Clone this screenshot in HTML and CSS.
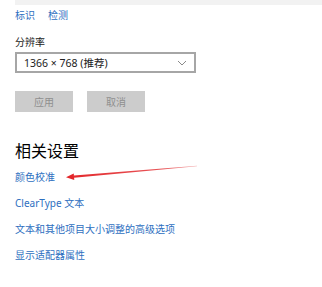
FILE: index.html
```html
<!DOCTYPE html>
<html lang="zh-CN">
<head>
<meta charset="utf-8">
<title>显示设置</title>
<link rel="stylesheet" href="styles.css">
</head>
<body>
<div class="page">
  <div class="band"></div>
  <div class="tabs">
    <a class="link">标识</a>
    <a class="link">检测</a>
  </div>
  <div class="label">分辨率</div>
  <div class="select">
    <span class="select-text">1366 × 768 (推荐)</span>
    <svg class="chev" width="10" height="6" viewBox="0 0 10 6"><path d="M1 1 L5 5 L9 1" fill="none" stroke="#8a8a8a" stroke-width="1"/></svg>
  </div>
  <div class="buttons">
    <div class="btn">应用</div>
    <div class="btn">取消</div>
  </div>
  <div class="heading">相关设置</div>
  <div class="links">
    <a class="link">颜色校准</a>
    <a class="link">ClearType 文本</a>
    <a class="link">文本和其他项目大小调整的高级选项</a>
    <a class="link">显示适配器属性</a>
  </div>
</div>
<svg class="arrow" width="322" height="287" viewBox="0 0 322 287">
  <defs>
    <linearGradient id="g" x1="66" y1="0" x2="197" y2="0" gradientUnits="userSpaceOnUse">
      <stop offset="0" stop-color="#e3262a"/>
      <stop offset="0.75" stop-color="#e8575a"/>
      <stop offset="1" stop-color="#f3b0b2"/>
    </linearGradient>
  </defs>
  <polygon points="74.1,177.8 73.9,175.4 196.97,165.7 197.03,166.3" fill="url(#g)"/>
  <polygon points="66,177.3 74.25,180 73.75,173.4" fill="#e3262a"/>
</svg>
</body>
</html>
```
FILE: styles.css
```css
html, body {
  margin: 0;
  padding: 0;
  background: #ffffff;
}
body {
  width: 322px;
  height: 287px;
  overflow: hidden;
  position: relative;
  font-family: "Noto Sans CJK SC", "Noto Sans", sans-serif;
  font-size: 10px;
  color: #1f1f1f;
}
.page {
  display: flex;
  flex-direction: column;
  align-items: flex-start;
  padding-left: 15px;
}
.band {
  align-self: stretch;
  height: 5px;
  background: #f2f2f2;
}
.link {
  color: #2e6fbf;
  line-height: 14px;
  white-space: nowrap;
}
.tabs {
  display: flex;
  gap: 13px;
  margin-top: 3px;
}
.label {
  margin-top: 13px;
  line-height: 14px;
  color: #222;
}
.select {
  margin-top: 3px;
  box-sizing: border-box;
  width: 181px;
  height: 21px;
  border: 2px solid #a6a6a6;
  display: flex;
  align-items: center;
  justify-content: space-between;
  padding: 0 7px 0 7px;
}
.select-text {
  font-family: "Noto Sans", "Noto Sans CJK SC", sans-serif;
  font-size: 10.5px;
  color: #222;
}
.buttons {
  display: flex;
  gap: 14px;
  margin-top: 18px;
}
.btn {
  width: 58px;
  height: 21px;
  background: #cccccc;
  color: #8f8f8f;
  display: flex;
  align-items: center;
  justify-content: center;
}
.heading {
  margin-top: 27px;
  font-size: 16px;
  line-height: 22px;
  color: #000;
}
.links {
  margin-top: 9px;
  display: flex;
  flex-direction: column;
  gap: 12px;
}
.links .link {
  font-family: "Noto Sans", "Noto Sans CJK SC", sans-serif;
}
.links .link:not(:nth-child(2)) {
  font-family: "Noto Sans CJK SC", sans-serif;
}
.arrow {
  position: absolute;
  left: 0;
  top: 0;
  pointer-events: none;
}
```
